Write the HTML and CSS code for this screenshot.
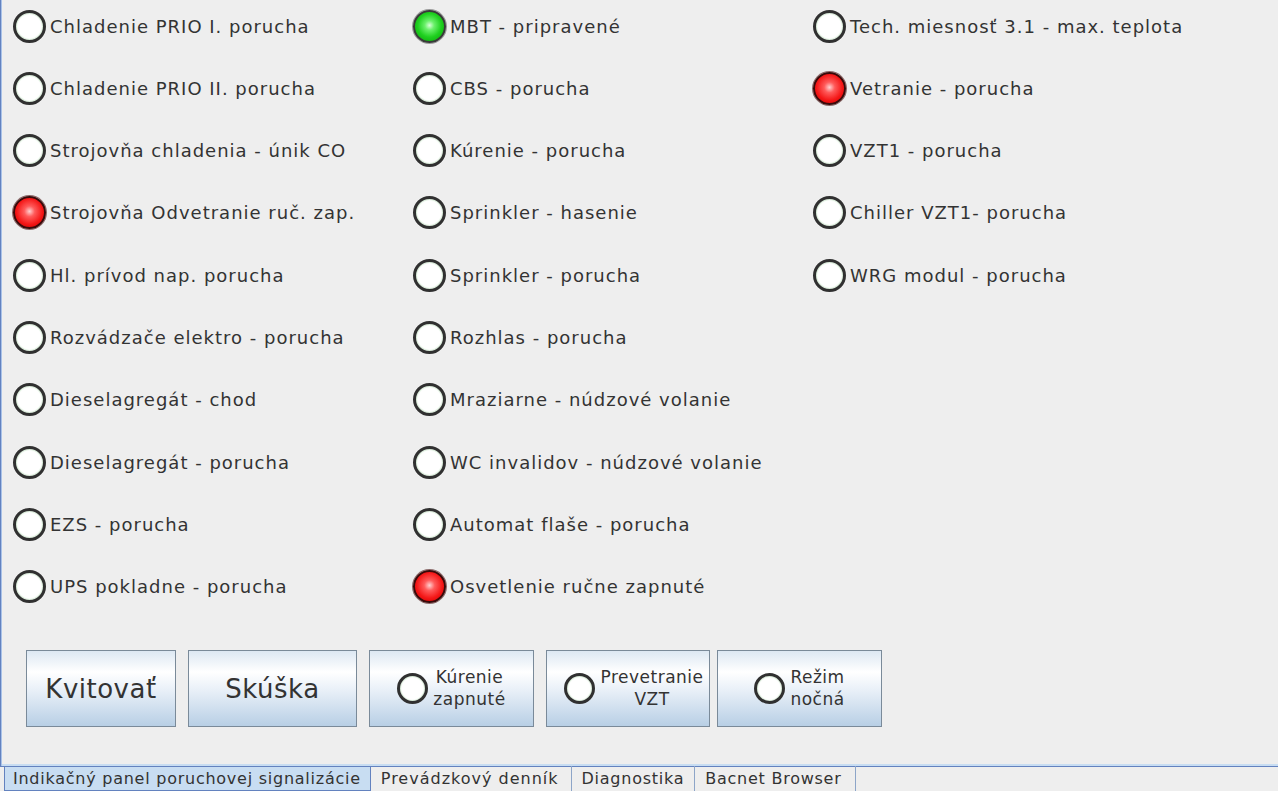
FILE: index.html
```html
<!DOCTYPE html>
<html lang="sk">
<head>
<meta charset="utf-8">
<title>Indikačný panel</title>
<link rel="stylesheet" href="styles.css">
</head>
<body>
<div class="app">
  <div class="panel">
    <div class="grid">
      <div class="item"><span class="led off"></span><span class="label">Chladenie PRIO I. porucha</span></div>
      <div class="item"><span class="led off"></span><span class="label">Chladenie PRIO II. porucha</span></div>
      <div class="item"><span class="led off"></span><span class="label">Strojovňa chladenia - únik CO</span></div>
      <div class="item"><span class="led red"></span><span class="label">Strojovňa Odvetranie ruč. zap.</span></div>
      <div class="item"><span class="led off"></span><span class="label">Hl. prívod nap. porucha</span></div>
      <div class="item"><span class="led off"></span><span class="label">Rozvádzače elektro - porucha</span></div>
      <div class="item"><span class="led off"></span><span class="label">Dieselagregát - chod</span></div>
      <div class="item"><span class="led off"></span><span class="label">Dieselagregát - porucha</span></div>
      <div class="item"><span class="led off"></span><span class="label">EZS - porucha</span></div>
      <div class="item"><span class="led off"></span><span class="label">UPS pokladne - porucha</span></div>

      <div class="item"><span class="led green"></span><span class="label">MBT - pripravené</span></div>
      <div class="item"><span class="led off"></span><span class="label">CBS - porucha</span></div>
      <div class="item"><span class="led off"></span><span class="label">Kúrenie - porucha</span></div>
      <div class="item"><span class="led off"></span><span class="label">Sprinkler - hasenie</span></div>
      <div class="item"><span class="led off"></span><span class="label">Sprinkler - porucha</span></div>
      <div class="item"><span class="led off"></span><span class="label">Rozhlas - porucha</span></div>
      <div class="item"><span class="led off"></span><span class="label">Mraziarne - núdzové volanie</span></div>
      <div class="item"><span class="led off"></span><span class="label">WC invalidov - núdzové volanie</span></div>
      <div class="item"><span class="led off"></span><span class="label">Automat flaše - porucha</span></div>
      <div class="item"><span class="led red"></span><span class="label">Osvetlenie ručne zapnuté</span></div>

      <div class="item"><span class="led off"></span><span class="label">Tech. miesnosť 3.1 - max. teplota</span></div>
      <div class="item"><span class="led red"></span><span class="label">Vetranie - porucha</span></div>
      <div class="item"><span class="led off"></span><span class="label">VZT1 - porucha</span></div>
      <div class="item"><span class="led off"></span><span class="label">Chiller VZT1- porucha</span></div>
      <div class="item"><span class="led off"></span><span class="label">WRG modul - porucha</span></div>
    </div>

    <div class="buttons">
      <button class="btn btn-big btn-kvit">Kvitovať</button>
      <button class="btn btn-big btn-skuska">Skúška</button>
      <button class="btn btn-toggle btn-kur"><span class="led off small"></span><span class="btn-text">Kúrenie<br>zapnuté</span></button>
      <button class="btn btn-toggle btn-prev"><span class="led off small"></span><span class="btn-text">Prevetranie<br>VZT</span></button>
      <button class="btn btn-toggle btn-rez"><span class="led off small"></span><span class="btn-text">Režim<br>nočná</span></button>
    </div>
  </div>

  <div class="tabs">
    <div class="tab selected">Indikačný panel poruchovej signalizácie</div>
    <div class="tab tab-wide">Prevádzkový denník</div>
    <div class="tab">Diagnostika</div>
    <div class="tab tab-last">Bacnet Browser</div>
  </div>
</div>
</body>
</html>
```

FILE: styles.css
```css
html, body {
  margin: 0;
  padding: 0;
  background: #eeeeee;
}

body {
  font-family: "DejaVu Sans", "Liberation Sans", sans-serif;
  color: #333333;
  overflow: hidden;
}

.app {
  width: 1278px;
  height: 791px;
  display: flex;
  flex-direction: column;
}

.panel {
  height: 766px;
  flex: none;
  box-sizing: border-box;
  border-left: 1px solid #6382bf;
  box-shadow: inset 1px 0 0 #a9c2e8, inset 0 -2px 0 #c8ddf2;
  display: flex;
  flex-direction: column;
}

.grid {
  display: grid;
  grid-auto-flow: column;
  grid-template-rows: repeat(10, 62.33px);
  grid-template-columns: 400px 400px 400px;
  padding: 9.5px 0 0 12px;
}

.item {
  display: flex;
  align-items: center;
  height: 33px;
  gap: 4px;
  font-size: 18px;
  letter-spacing: 1px;
}

.label {
  white-space: nowrap;
}

.led {
  flex: none;
  width: 33px;
  height: 33px;
  box-sizing: border-box;
  border-radius: 50%;
  display: inline-block;
}

.led.off {
  background: #ffffff;
  border: 3px solid #303030;
  box-shadow: inset 0 0 1px 1px #d4ead4;
}

.led.green {
  border: 2px solid #3a3a3a;
  background: radial-gradient(circle at 50% 46%, #d8ffd8 0%, #6af06a 22%, #1fd01f 55%, #0fae0f 85%, #0a7a0a 100%);
  box-shadow: 0 0 0 1px #9a9a9a;
}

.led.red {
  border: 2px solid #3a0a0a;
  background: radial-gradient(circle at 50% 46%, #ffd0d0 0%, #ff5a5a 25%, #f41818 60%, #d40000 88%, #900000 100%);
  box-shadow: 0 0 0 1px #8a6a6a;
}

.led.small {
  width: 31px;
  height: 31px;
}

.buttons {
  display: flex;
  padding-left: 25px;
  margin-top: 17.5px;
  gap: 12px;
}

.btn {
  height: 77px;
  box-sizing: border-box;
  border: 1px solid #7a8a99;
  background: linear-gradient(#dde8f3 0%, #ffffff 28%, #e6eef7 55%, #b8cfe5 100%);
  color: #333333;
  font-family: "DejaVu Sans", "Liberation Sans", sans-serif;
  padding: 0;
  margin: 0;
  display: flex;
  align-items: center;
  justify-content: center;
}

.btn-big {
  font-size: 26px;
  letter-spacing: 0.5px;
}

.btn-kvit { width: 150px; }
.btn-skuska { width: 169px; }
.btn-kur { width: 165px; }
.btn-prev { width: 164px; padding-left: 12px; }
.btn-rez { width: 165px; margin-left: -5px; }

.btn-toggle {
  gap: 5px;
}

.btn-text {
  font-size: 17px;
  letter-spacing: 0.5px;
  line-height: 22px;
  text-align: center;
  margin-top: -1px;
}

.tabs {
  height: 25px;
  flex: none;
  box-sizing: border-box;
  display: flex;
  padding-left: 4px;
  border-top: 1px solid #6382bf;
}

.tab {
  font-size: 16px;
  letter-spacing: 0.75px;
  line-height: 25px;
  height: 25px;
  box-sizing: border-box;
  padding: 0 10px 0 10px;
  border-right: 1px solid #8da5c8;
  margin-top: -1px;
  white-space: nowrap;
}

.tab-wide {
  padding-right: 12px;
  letter-spacing: 1px;
}

.tab-last {
  padding-right: 13px;
}

.tab.selected {
  background: #c8ddf2;
  border: 1px solid #6382bf;
  line-height: 23px;
  padding: 0 9px 0 8px;
}
```
